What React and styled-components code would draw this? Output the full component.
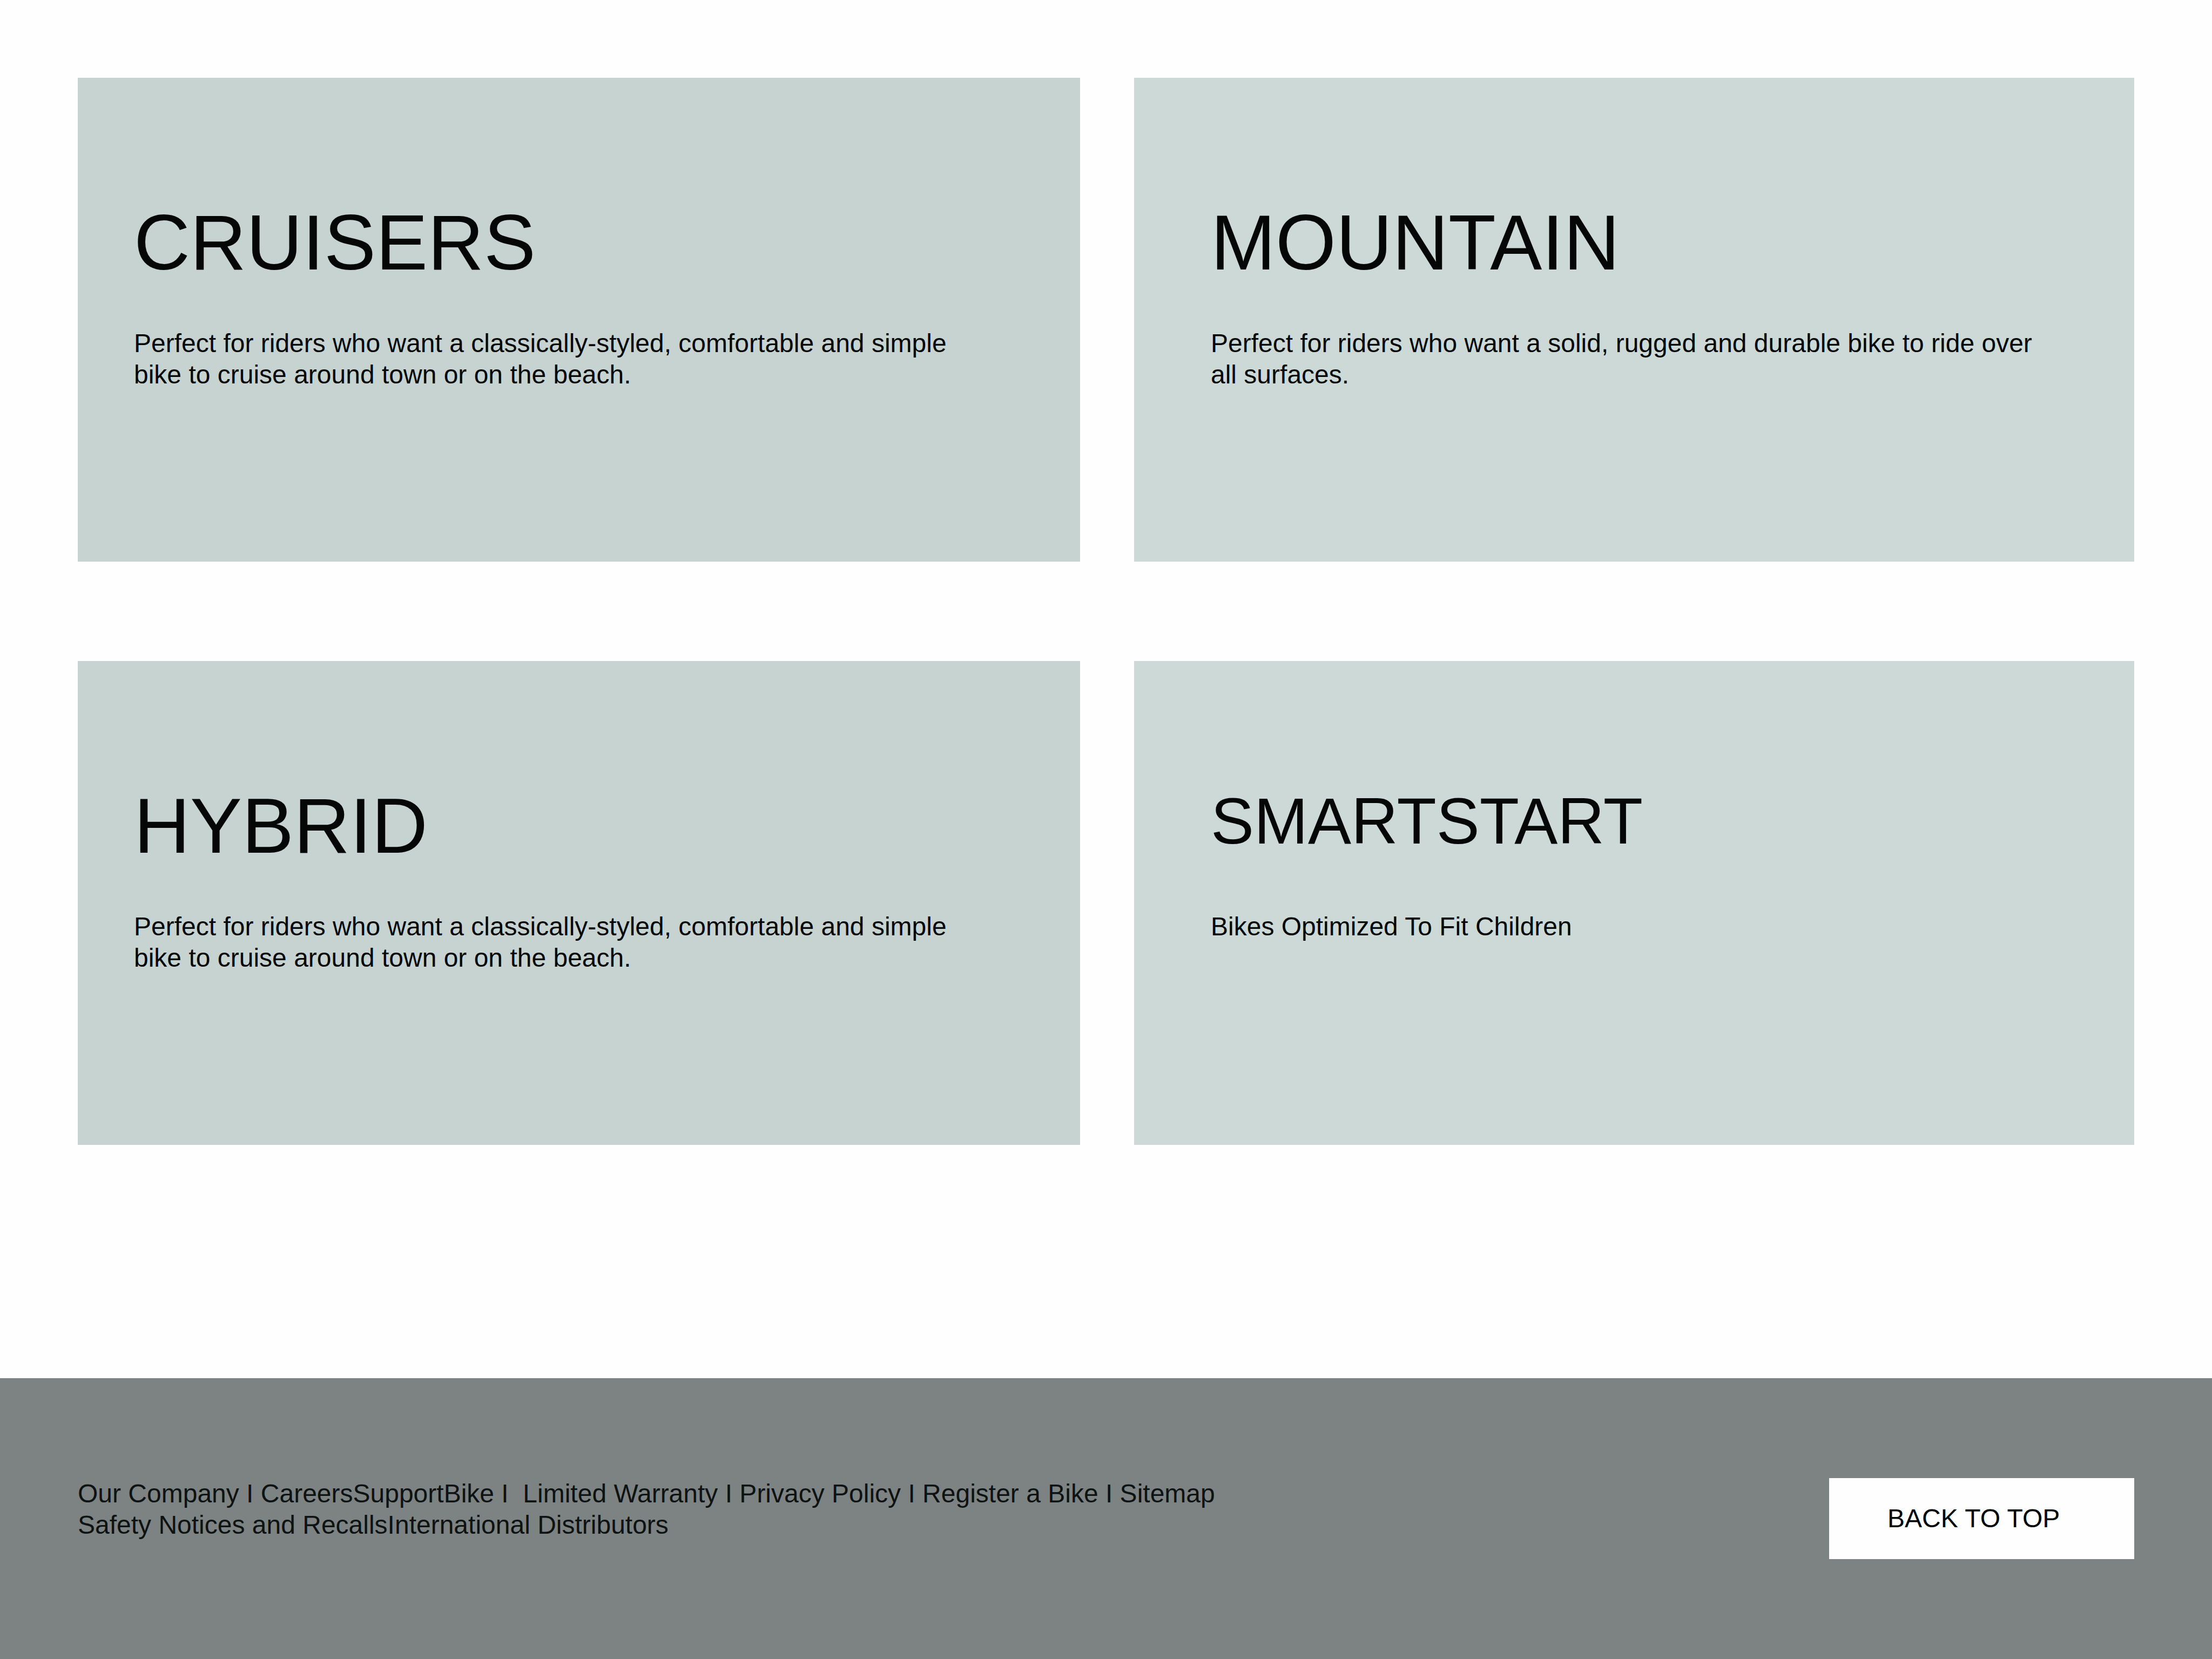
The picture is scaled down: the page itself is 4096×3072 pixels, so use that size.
import React from "react";
import styled, { createGlobalStyle } from "styled-components";

const GlobalStyle = createGlobalStyle`
  *, *::before, *::after { box-sizing: border-box; }
  body {
    margin: 0;
    background: #fefefe;
    color: #050707;
    font-family: "Liberation Sans", Arial, Helvetica, sans-serif;
    font-size: 48px;
    line-height: 58px;
  }
`;

const Page = styled.div`
  display: flex;
  flex-direction: column;
  min-height: 100vh;
`;

const Categories = styled.main`
  display: grid;
  grid-template-columns: 464fr 463fr;
  gap: 184px 100px;
  padding: 144px 144px 432px;
`;

const Card = styled.section`
  padding: 226px 140px 317px ${({ $light }) => ($light ? 142 : 104)}px;
  background: ${({ $light }) => ($light ? "#ccd9d6" : "#c7d3d1")};
`;

const Title = styled.h2`
  min-height: 160px;
  margin: 0 0 77px;
  font-size: ${({ $compact }) => ($compact ? 120 : 144)}px;
  line-height: ${({ $compact }) => ($compact ? 140 : 160)}px;
  font-weight: 400;
`;

const Description = styled.p`
  max-width: 1560px;
  margin: 0;
`;

const Footer = styled.footer`
  display: flex;
  flex-grow: 1;
  align-items: flex-start;
  justify-content: space-between;
  padding: 185px 144px;
  background: #7d8382;
`;

const FooterNav = styled.nav`
  color: #0d1212;
`;

const LinkRow = styled.div`
  white-space: pre;
`;

const FooterLink = styled.a`
  color: inherit;
  text-decoration: none;
`;

const TopButton = styled.button`
  min-width: 565px;
  padding: 46px 108px;
  border: 0;
  background: #fefefe;
  color: #000404;
  font: inherit;
  text-align: left;
  cursor: pointer;
`;

const cruiserText =
  "Perfect for riders who want a classically-styled, comfortable and simple bike to cruise around town or on the beach.";

const categories = [
  { title: "CRUISERS", text: cruiserText },
  {
    title: "MOUNTAIN",
    text: "Perfect for riders who want a solid, rugged and durable bike to ride over all surfaces.",
    light: true,
  },
  { title: "HYBRID", text: cruiserText },
  {
    title: "SMARTSTART",
    text: "Bikes Optimized To Fit Children",
    light: true,
    compact: true,
  },
];

// Each entry is a link label and the text that follows it on the line.
const linkRows = [
  [
    ["Our Company", " I "],
    ["Careers", ""],
    ["Support", ""],
    ["Bike", " I  "],
    ["Limited Warranty", " I "],
    ["Privacy Policy", " I "],
    ["Register a Bike", " I "],
    ["Sitemap", ""],
  ],
  [
    ["Safety Notices and Recalls", ""],
    ["International Distributors", ""],
  ],
];

export default function App() {
  return (
    <>
      <GlobalStyle />
      <Page>
        <Categories>
          {categories.map(({ title, text, light, compact }) => (
            <Card key={title} $light={light}>
              <Title $compact={compact}>{title}</Title>
              <Description>{text}</Description>
            </Card>
          ))}
        </Categories>
        <Footer>
          <FooterNav aria-label="Footer">
            {linkRows.map((row, i) => (
              <LinkRow key={i}>
                {row.map(([label, after]) => (
                  <React.Fragment key={label}>
                    <FooterLink href="#">{label}</FooterLink>
                    {after}
                  </React.Fragment>
                ))}
              </LinkRow>
            ))}
          </FooterNav>
          <TopButton
            type="button"
            onClick={() => window.scrollTo({ top: 0, behavior: "smooth" })}
          >
            BACK TO TOP
          </TopButton>
        </Footer>
      </Page>
    </>
  );
}
